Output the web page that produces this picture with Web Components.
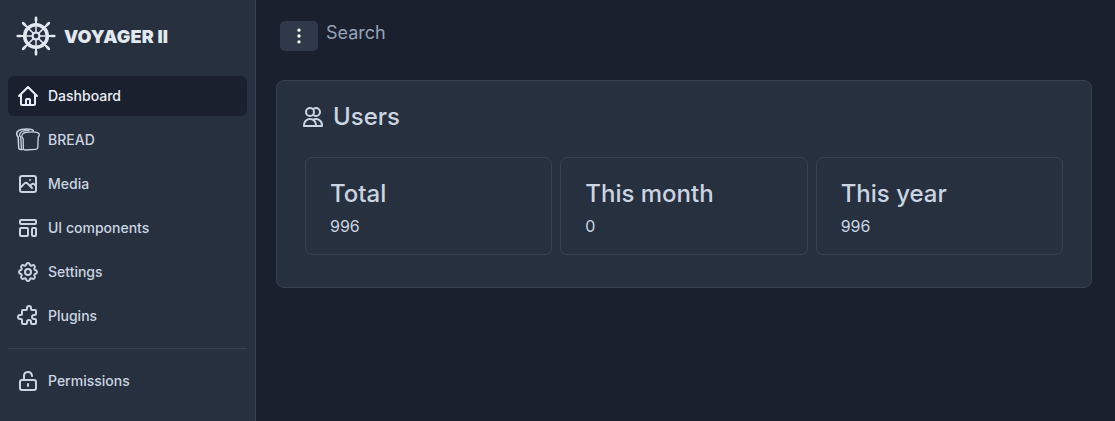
<!DOCTYPE html>
<html lang="en"><head><meta charset="utf-8"><title>Voyager II</title>
<style>html,body{margin:0;height:100%;background:#1b202e;overflow:hidden}body{font:16px/24px Inter,sans-serif;color:#cbd5e1}</style></head>
<body><voyager-app></voyager-app>
<script>
const icons={
home:'<path d="M3 12l2-2m0 0l7-7 7 7M5 10v10a1 1 0 001 1h3m10-11l2 2m-2-2v10a1 1 0 01-1 1h-3m-6 0a1 1 0 001-1v-4a1 1 0 011-1h2a1 1 0 011 1v4a1 1 0 001 1m-6 0h6"/>',
bread:'<path stroke-width="1.300" d="M7 5.600C8.500 4.300 12 3.800 16 3.800c4.700 0 7.100.9 7.300 2.700.1 1.300-.4 2-1.100 2.600l-.4 10.700c-.1 1-1 1.500-2.300 1.600l-9.700.6c-1.600.1-2.400-.5-2.400-1.600L7.100 10.400C5.300 9.400 5.400 7.100 7 5.600z"/><path stroke-width="1.500" d="M6.200 21.600l-1.900-.2c-1-.1-1.600-.6-1.600-1.400L2.200 9C.3 7.200.2 4.500 1.900 3.100 3.700 1.700 7.500 1.100 11 1.100c3 0 5.300.4 6.300 1.500"/><path stroke-width="1.300" d="M5.400 20.500L4.800 9.400C3.100 7.800 3.200 5.500 4.900 4.200 6.500 3 9.500 2.500 13 2.400"/>',
media:'<path d="M4 16l4.586-4.586a2 2 0 012.828 0L16 16m-2-2l1.586-1.586a2 2 0 012.828 0L20 14m-6-6h.01M6 20h12a2 2 0 002-2V6a2 2 0 00-2-2H6a2 2 0 00-2 2v12a2 2 0 002 2z"/>',
layout:'<path d="M4 5a1 1 0 011-1h14a1 1 0 011 1v2a1 1 0 01-1 1H5a1 1 0 01-1-1V5zM4 13a1 1 0 011-1h6a1 1 0 011 1v6a1 1 0 01-1 1H5a1 1 0 01-1-1v-6zM16 13a1 1 0 011-1h2a1 1 0 011 1v6a1 1 0 01-1 1h-2a1 1 0 01-1-1v-6z"/>',
gear:'<path d="M10.325 4.317c.426-1.756 2.924-1.756 3.350 0a1.724 1.724 0 0 0 2.573 1.066c1.543-.94 3.310.826 2.370 2.370a1.724 1.724 0 0 0 1.065 2.572c1.756.426 1.756 2.924 0 3.350a1.724 1.724 0 0 0-1.066 2.573c.94 1.543-.826 3.310-2.370 2.370a1.724 1.724 0 0 0-2.572 1.065c-.426 1.756-2.924 1.756-3.350 0a1.724 1.724 0 0 0-2.573-1.066c-1.543.94-3.310-.826-2.370-2.370a1.724 1.724 0 0 0-1.065-2.572c-1.756-.426-1.756-2.924 0-3.350a1.724 1.724 0 0 0 1.066-2.573c-.94-1.543.826-3.310 2.370-2.370.996.608 2.296.070 2.572-1.065z"/><circle cx="12" cy="12" r="3"/>',
puzzle:'<path d="M11 4a2 2 0 114 0v1a1 1 0 001 1h3a1 1 0 011 1v3a1 1 0 01-1 1h-1a2 2 0 100 4h1a1 1 0 011 1v3a1 1 0 01-1 1h-3a1 1 0 01-1-1v-1a2 2 0 10-4 0v1a1 1 0 01-1 1H7a1 1 0 01-1-1v-3a1 1 0 00-1-1H4a2 2 0 110-4h1a1 1 0 001-1V7a1 1 0 011-1h3a1 1 0 001-1V4z"/>',
unlock:'<path d="M8 11V7a4 4 0 017.900-.9L16 7m-4 8v2m-6 4h12a2 2 0 002-2v-6a2 2 0 00-2-2H6a2 2 0 00-2 2v6a2 2 0 002 2z"/>',
users:'<path d="M12 4.354a4 4 0 110 5.292M15 21H3v-1a6 6 0 0112 0v1zm0 0h6v-1a6 6 0 00-9-5.197M13 7a4 4 0 11-8 0 4 4 0 018 0z"/>',
dots:'<path d="M12 6a1 1 0 110-2 1 1 0 010 2zm0 7a1 1 0 110-2 1 1 0 010 2zm0 7a1 1 0 110-2 1 1 0 010 2z"/>',
wheel:'<circle cx="12" cy="12" r="6.800" stroke-width="2.100"/><circle cx="12" cy="12" r="2.100" stroke-width="1.300"/>'+[0,45,90,135,180,225,270,315].map(a=>`<g transform="rotate(${a} 12 12)"><path stroke-width=".9" d="M12 10V5"/><path stroke-width="1.100" d="M12 5V.8"/><path stroke-width="1.600" d="M12 2.700V1.200"/></g>`).join('')
};
function define(name,css,html){
 customElements.define(name,class extends HTMLElement{
  connectedCallback(){if(this.shadowRoot)return;const t=document.createElement('template');t.innerHTML=`<style>*{box-sizing:border-box}:host{box-sizing:border-box;display:block}${css}</style>${typeof html==='function'?html(this):html}`;this.attachShadow({mode:'open'}).append(t.content.cloneNode(true));}
 });
}
define('v-icon',':host{width:24px;height:24px;flex:none}svg{display:block;width:100%;height:100%;fill:none;stroke:currentColor;stroke-width:2;stroke-linecap:round;stroke-linejoin:round}',e=>`<svg viewBox="0 0 24 24">${icons[e.getAttribute('name')]}</svg>`);
define('nav-item',':host{height:40px;padding:8px;display:flex;align-items:center;gap:8px;border-radius:6px;font-size:14px;line-height:20px;font-weight:500}:host([active]){background:#1b202e;color:#e9eef6}',e=>`<v-icon name="${e.getAttribute('icon')}"></v-icon><span><slot></slot></span>`);
define('side-bar',':host{width:256px;height:100%;background:#27303f;border-right:1px solid #374151;padding:16px 8px}header{height:40px;margin:0 8px 20px;display:flex;align-items:center;gap:8px;color:#e2e8f0;font-size:18px;line-height:24px;letter-spacing:.1px;font-weight:900;white-space:nowrap}header span{padding-top:2px}header v-icon{width:40px;height:40px}nav{display:grid;gap:4px}hr{border:0;border-top:1px solid #374151;margin:12px 0}',
`<header><v-icon name="wheel"></v-icon><span>VOYAGER II</span></header><nav><nav-item active icon="home">Dashboard</nav-item><nav-item icon="bread">BREAD</nav-item><nav-item icon="media">Media</nav-item><nav-item icon="layout">UI components</nav-item><nav-item icon="gear">Settings</nav-item><nav-item icon="puzzle">Plugins</nav-item></nav><hr><nav-item icon="unlock">Permissions</nav-item>`);
define('top-bar',':host{display:flex;gap:8px;height:30px;margin:0 0 29px 4px}button{width:38px;height:30px;border:0;border-radius:5px;background:#303949;color:#fff;padding:0;display:grid;place-items:center}v-icon{width:20px;height:20px}span{font-size:18px;line-height:24px;color:#94a3b8}','<button aria-label="Menu"><v-icon name="dots"></v-icon></button><span>Search</span>');
define('stat-card',':host{height:98px;border:1px solid #374151;border-radius:7px;padding:20px 24px}h3{margin:0;font-size:24px;line-height:32px;font-weight:500}p{margin:4px 0 0;font-size:16px;line-height:24px}',e=>`<h3>${e.getAttribute('label')}</h3><p><slot></slot></p>`);
define('users-panel',':host{height:208px;background:#27303f;border:1px solid #374151;border-radius:8px;padding:20px 28px}h2{display:flex;align-items:center;gap:8px;margin:0 0 24px -4px;font-size:24px;line-height:32px;font-weight:500}section{display:grid;grid-template-columns:repeat(3,1fr);gap:8px}','<h2><v-icon name="users"></v-icon><span>Users</span></h2><section><stat-card label="Total">996</stat-card><stat-card label="This month">0</stat-card><stat-card label="This year">996</stat-card></section>');
define('voyager-app',':host{display:grid;grid-template-columns:256px 1fr;height:100vh}main{padding:21px 23px 0 20px}','<side-bar></side-bar><main><top-bar></top-bar><users-panel></users-panel></main>');
</script></body></html>
